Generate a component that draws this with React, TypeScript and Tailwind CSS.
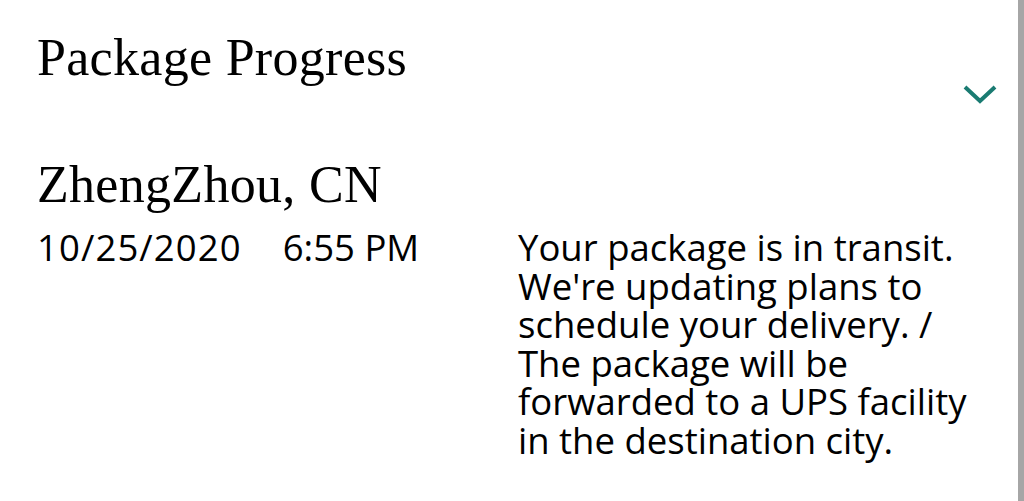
export default function App() {
  return (
    <div className="flex h-[501px] w-[1024px] overflow-hidden bg-white">
      <div className="flex-1 pl-[37px] pr-[20px]">
        <div className="flex items-start justify-between">
          <h1 className="mt-[30px] font-['Liberation_Serif',serif] text-[52px] leading-[56px] tracking-[0.3px] text-black">
            Package Progress
          </h1>
          <button type="button" className="mt-[81px] text-[#1a7b72]">
            <svg width="36" height="24" viewBox="0 0 36 24" fill="none">
              <path
                d="M3 6 L18 20 L33 6"
                stroke="currentColor"
                strokeWidth="4"
                strokeLinecap="butt"
                strokeLinejoin="miter"
              />
            </svg>
          </button>
        </div>

        <div className="mt-[52px]">
          <h2 className="font-['Liberation_Serif',serif] text-[52px] leading-[56px] tracking-[0.3px] text-black">
            ZhengZhou, CN
          </h2>
          <div className="mt-[15px] flex font-['Open_Sans',sans-serif] text-[36.5px] leading-[38.6px] text-black">
            <div className="flex w-[481px] gap-[41px]">
              <span className="tracking-[1.1px]">10/25/2020</span>
              <span>6:55 PM</span>
            </div>
            <p className="w-[480px]">
              Your package is in transit. We're updating plans to schedule your
              delivery. / The package will be forwarded to a UPS facility in the
              destination city.
            </p>
          </div>
        </div>
      </div>
      <div className="w-[6px] bg-[#a6a6a6]" />
    </div>
  );
}
